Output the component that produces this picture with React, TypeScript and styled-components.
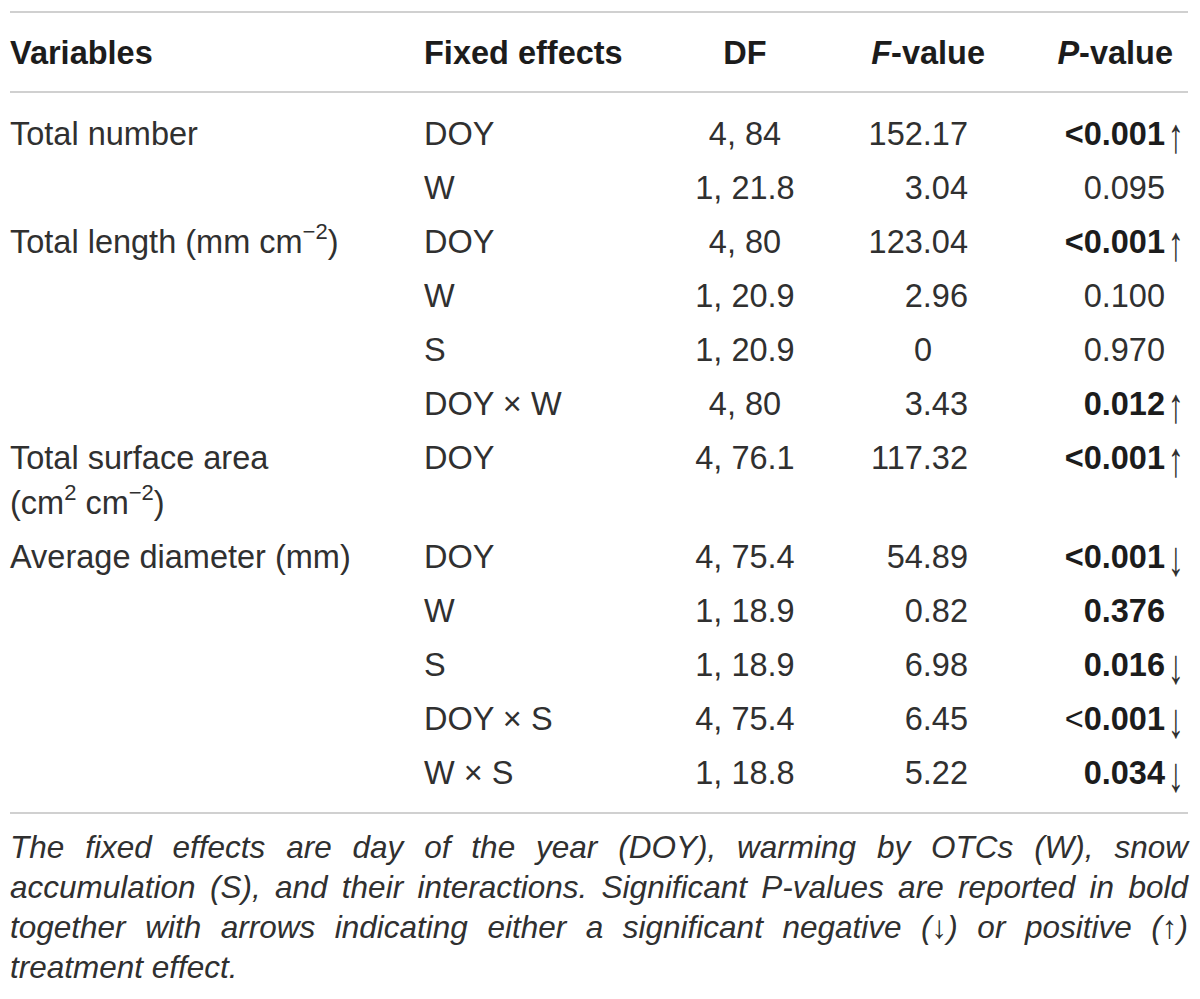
import React from 'react';
import styled, { createGlobalStyle } from 'styled-components';

/* --------------------------------- Styles --------------------------------- */

const GlobalStyle = createGlobalStyle`
  html, body {
    margin: 0;
    padding: 0;
    background: #ffffff;
  }
  body {
    font-family: "Liberation Sans", Arial, Helvetica, sans-serif;
    color: #303030;
  }
`;

const Page = styled.div`
  width: 1178px;
  padding: 11px 12px 0 10px;
`;

const Table = styled.table`
  width: 100%;
  border-collapse: collapse;
  table-layout: fixed;
  border-top: 2px solid #d0d0d0;
  border-bottom: 2px solid #d0d0d0;

  tbody tr:first-child td {
    padding-top: 19px;
  }
  tbody tr:last-child td {
    padding-bottom: 16px;
  }
`;

const HeadCell = styled.th<{ $w: number; $align: string; $pad?: number }>`
  width: ${(p) => p.$w}px;
  height: 80px;
  padding: 3px ${(p) => p.$pad || 0}px 0 0;
  box-sizing: border-box;
  text-align: ${(p) => p.$align};
  vertical-align: middle;
  font-size: 32.5px;
  font-weight: 700;
  color: #1c1c1c;
  border-bottom: 2px solid #d0d0d0;
  white-space: nowrap;

  i {
    font-style: italic;
  }
`;

const Cell = styled.td<{ $align?: string; $pad?: number }>`
  padding: 5px ${(p) => p.$pad || 0}px 4px 0;
  text-align: ${(p) => p.$align || 'left'};
  vertical-align: top;
  font-size: 32.5px;
  line-height: 45px;
  white-space: nowrap;
`;

const Sup = styled.sup`
  font-size: 22px;
  line-height: 0;
  vertical-align: 14px;
`;

const PValue = styled.span<{ $bold: boolean }>`
  font-weight: ${(p) => (p.$bold ? 700 : 400)};
  color: ${(p) => (p.$bold ? '#1c1c1c' : 'inherit')};
`;

const Less = styled.span<{ $bold: boolean }>`
  font-weight: ${(p) => (p.$bold ? 700 : 400)};
`;

const ArrowSlot = styled.span`
  display: inline-block;
  width: 19px;
  text-align: right;
  font-weight: 400;
  transform: translateY(2px) scale(1, 1.5);
`;

const Caption = styled.div`
  margin-top: 13px;
  font-size: 31.5px;
  line-height: 40px;
  font-style: italic;
  color: #303030;
`;

const CaptionLine = styled.div<{ $last: boolean }>`
  text-align: justify;
  text-align-last: ${(p) => (p.$last ? 'left' : 'justify')};
  white-space: nowrap;
`;

/* ---------------------------------- Data ---------------------------------- */

type Arrow = 'up' | 'down' | null;

interface Row {
  variable?: React.ReactNode;
  effect: React.ReactNode;
  df: string;
  f: string;
  fShift?: number; // extra right padding to line "0" up on the decimal point
  lt?: 'bold' | 'thin';
  p: string;
  bold: boolean;
  arrow: Arrow;
}

const rows: Row[] = [
  { variable: 'Total number', effect: 'DOY', df: '4, 84', f: '152.17', lt: 'bold', p: '0.001', bold: true, arrow: 'up' },
  { effect: 'W', df: '1, 21.8', f: '3.04', p: '0.095', bold: false, arrow: null },
  {
    variable: (
      <>
        Total length (mm cm<Sup>−2</Sup>)
      </>
    ),
    effect: 'DOY',
    df: '4, 80',
    f: '123.04',
    lt: 'bold',
    p: '0.001',
    bold: true,
    arrow: 'up',
  },
  { effect: 'W', df: '1, 20.9', f: '2.96', p: '0.100', bold: false, arrow: null },
  { effect: 'S', df: '1, 20.9', f: '0', fShift: 36, p: '0.970', bold: false, arrow: null },
  { effect: 'DOY × W', df: '4, 80', f: '3.43', p: '0.012', bold: true, arrow: 'up' },
  {
    variable: (
      <>
        Total surface area
        <br />
        (cm<Sup>2</Sup> cm<Sup>−2</Sup>)
      </>
    ),
    effect: 'DOY',
    df: '4, 76.1',
    f: '117.32',
    lt: 'bold',
    p: '0.001',
    bold: true,
    arrow: 'up',
  },
  { variable: 'Average diameter (mm)', effect: 'DOY', df: '4, 75.4', f: '54.89', lt: 'bold', p: '0.001', bold: true, arrow: 'down' },
  { effect: 'W', df: '1, 18.9', f: '0.82', p: '0.376', bold: true, arrow: null },
  { effect: 'S', df: '1, 18.9', f: '6.98', p: '0.016', bold: true, arrow: 'down' },
  { effect: 'DOY × S', df: '4, 75.4', f: '6.45', lt: 'thin', p: '0.001', bold: true, arrow: 'down' },
  { effect: 'W × S', df: '1, 18.8', f: '5.22', p: '0.034', bold: true, arrow: 'down' },
];

const captionLines = [
  'The fixed effects are day of the year (DOY), warming by OTCs (W), snow',
  'accumulation (S), and their interactions. Significant P-values are reported in bold',
  'together with arrows indicating either a significant negative (↓) or positive (↑)',
  'treatment effect.',
];

/* ------------------------------- Component -------------------------------- */

const App = () => (
  <>
    <GlobalStyle />
    <Page>
      <Table>
        <thead>
          <tr>
            <HeadCell $w={414} $align="left">Variables</HeadCell>
            <HeadCell $w={266} $align="left">Fixed effects</HeadCell>
            <HeadCell $w={110} $align="center">DF</HeadCell>
            <HeadCell $w={185} $align="right">
              <i>F</i>-value
            </HeadCell>
            <HeadCell $w={203} $align="right" $pad={15}>
              <i>P</i>-value
            </HeadCell>
          </tr>
        </thead>
        <tbody>
          {rows.map((r, i) => (
            <tr key={i}>
              <Cell>{r.variable}</Cell>
              <Cell>{r.effect}</Cell>
              <Cell $align="center">{r.df}</Cell>
              <Cell $align="right" $pad={17 + (r.fShift || 0)}>
                {r.f}
              </Cell>
              <Cell $align="right" $pad={4}>
                <PValue $bold={r.bold}>
                  {r.lt && <Less $bold={r.lt === 'bold'}>&lt;</Less>}
                  {r.p}
                </PValue>
                <ArrowSlot>{r.arrow === 'up' ? '↑' : r.arrow === 'down' ? '↓' : ''}</ArrowSlot>
              </Cell>
            </tr>
          ))}
        </tbody>
      </Table>
      <Caption>
        {captionLines.map((line, i) => (
          <CaptionLine key={i} $last={i === captionLines.length - 1}>
            {line}
          </CaptionLine>
        ))}
      </Caption>
    </Page>
  </>
);

export default App;
